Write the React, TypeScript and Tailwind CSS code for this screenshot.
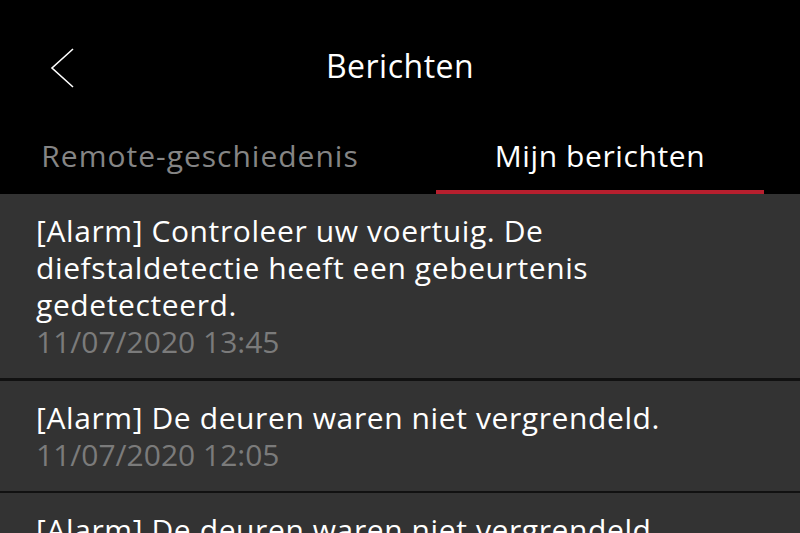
import React from "react";

const font = { fontFamily: '"Open Sans", "Noto Sans", sans-serif' };

function Item({ lines, date }: { lines: string[]; date: string }) {
  return (
    <div className="bg-[#333333] pl-[36px] pr-4 pt-[18px] pb-[18px]">
      {lines.map((l, i) => (
        <div key={i} className="text-[30px] leading-[37px] tracking-[0.6px] text-white whitespace-nowrap">
          {l}
        </div>
      ))}
      <div className="text-[30px] leading-[37px] text-[#7b7b7b] whitespace-nowrap">{date}</div>
    </div>
  );
}

export default function App() {
  return (
    <div className="w-[800px] h-[533px] overflow-hidden bg-black" style={font}>
      <div className="relative h-[134px] pt-[46px] flex justify-center">
        <svg className="absolute left-[50px] top-[47px]" width="26" height="44" viewBox="0 0 26 44">
          <polyline points="23,2 2,21 23,40" fill="none" stroke="white" strokeWidth="1.6" />
        </svg>
        <div className="text-[32px] leading-[40px] tracking-[0.5px] text-white">Berichten</div>
      </div>
      <div className="flex h-[60px]">
        <div className="w-[400px] flex flex-col pt-[2px]">
          <div className="h-[40px] flex justify-center text-[30px] leading-[40px] tracking-[1px] text-[#858585]">
            Remote-geschiedenis
          </div>
          <div className="flex-1" />
          <div className="h-[4px]" />
        </div>
        <div className="w-[400px] flex flex-col pt-[2px]">
          <div className="h-[40px] flex justify-center text-[30px] leading-[40px] tracking-[0.6px] text-white">
            Mijn berichten
          </div>
          <div className="flex-1" />
          <div className="h-[4px] mx-[36px] bg-[#b71f2e]" />
        </div>
      </div>
      <div className="bg-[#111]">
        <Item
          lines={[
            "[Alarm] Controleer uw voertuig. De",
            "diefstaldetectie heeft een gebeurtenis",
            "gedetecteerd.",
          ]}
          date="11/07/2020 13:45"
        />
        <div className="h-[3px] bg-[#111]" />
        <Item lines={["[Alarm] De deuren waren niet vergrendeld."]} date="11/07/2020 12:05" />
        <div className="h-[2px] bg-[#111]" />
        <Item lines={["[Alarm] De deuren waren niet vergrendeld."]} date="11/07/2020 11:40" />
      </div>
    </div>
  );
}
